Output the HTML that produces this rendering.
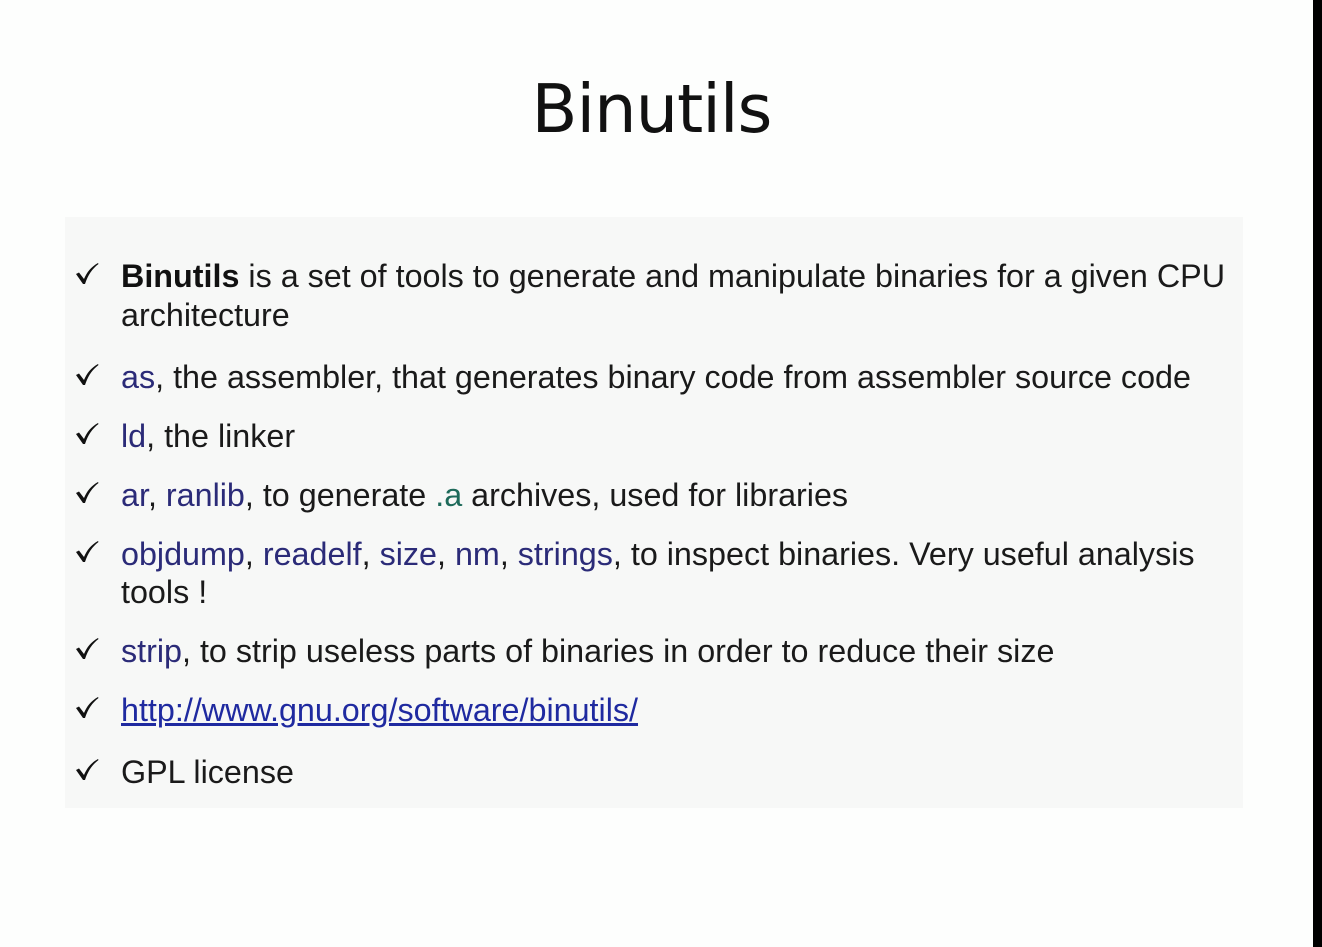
<!DOCTYPE html>
<html><head><meta charset="utf-8"><style>
html,body{margin:0;padding:0;}
body{width:1322px;height:947px;background:#fdfefd;position:relative;overflow:hidden;font-family:"Liberation Sans",sans-serif;}
.bar{position:absolute;left:1313px;top:0;width:9px;height:947px;background:#000;}
h1{position:absolute;left:0;width:1303px;text-align:center;top:70px;margin:0;font-weight:normal;font-size:67px;color:#111;font-family:"DejaVu Sans","Liberation Sans",sans-serif;letter-spacing:-1px;}
.box{position:absolute;left:65px;top:217px;width:1178px;height:591px;background:#f7f8f7;}
.l{position:absolute;left:121px;font-size:32.3px;color:#1a1a1a;white-space:nowrap;letter-spacing:0;line-height:1;}
.c{position:absolute;left:75px;width:24px;height:24px;}
.b{color:#2b2b78;}
.g{color:#1e6a5a;}
a{color:#1f2aa0;text-decoration:underline;}
</style></head><body>
<svg width="0" height="0" style="position:absolute"><defs><path id="ck" d="M1 12 L4 10.5 L9 17 C12 10 16 5 23 1 L23.5 2 C17 7 13 13 10 22 L8 22 Z" fill="#111"/></defs></svg>
<div class="bar"></div>
<h1>Binutils</h1>
<div class="box"></div>
<svg class="c" style="top:262px"><use href="#ck"/></svg>
<div class="l" style="top:260px"><b style="color:#111">Binutils</b> is a set of tools to generate and manipulate binaries for a given CPU</div>
<div class="l" style="top:299px">architecture</div>
<svg class="c" style="top:363px"><use href="#ck"/></svg>
<div class="l" style="top:361px"><span class="b">as</span>, the assembler, that generates binary code from assembler source code</div>
<svg class="c" style="top:422px"><use href="#ck"/></svg>
<div class="l" style="top:420px"><span class="b">ld</span>, the linker</div>
<svg class="c" style="top:481px"><use href="#ck"/></svg>
<div class="l" style="top:479px"><span class="b">ar</span>, <span class="b">ranlib</span>, to generate <span class="g">.a</span> archives, used for libraries</div>
<svg class="c" style="top:540px"><use href="#ck"/></svg>
<div class="l" style="top:538px"><span class="b">objdump</span>, <span class="b">readelf</span>, <span class="b">size</span>, <span class="b">nm</span>, <span class="b">strings</span>, to inspect binaries. Very useful analysis</div>
<div class="l" style="top:576px">tools !</div>
<svg class="c" style="top:637px"><use href="#ck"/></svg>
<div class="l" style="top:635px"><span class="b">strip</span>, to strip useless parts of binaries in order to reduce their size</div>
<svg class="c" style="top:696px"><use href="#ck"/></svg>
<div class="l" style="top:694px"><a>http://www.gnu.org/software/binutils/</a></div>
<svg class="c" style="top:758px"><use href="#ck"/></svg>
<div class="l" style="top:756px">GPL license</div>
</body></html>
